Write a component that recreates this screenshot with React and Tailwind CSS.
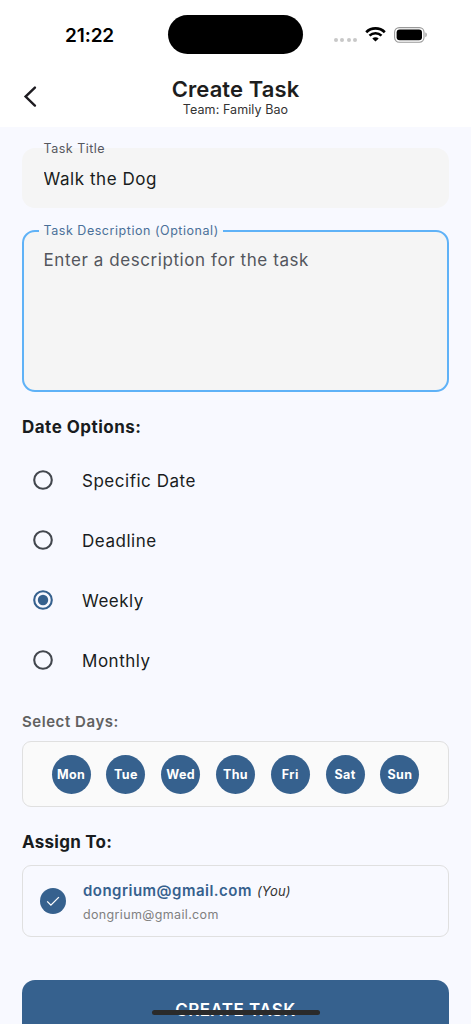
import { useState } from "react";

const DAYS = ["Mon", "Tue", "Wed", "Thu", "Fri", "Sat", "Sun"];
const DATE_OPTIONS = ["Specific Date", "Deadline", "Weekly", "Monthly"];

const StatusBar = () => (
  <div className="flex h-[69px] items-center">
    <div className="w-[168px] pl-[65px] pt-px text-[19px] font-semibold leading-none tracking-[-0.1px] text-black">21:22</div>
    <div className="h-[39px] w-[135px] rounded-full bg-black" />
    <div className="flex items-center pl-[31px]">
      <div className="mt-[11px] flex gap-[2.4px]">
        {[0, 1, 2, 3].map((dot) => (
          <span key={dot} className="size-[4px] rounded-full bg-[#c8c8c8]" />
        ))}
      </div>
      <svg className="ml-[8px] h-[15px] w-[21px]" viewBox="0 0 21 15">
        <path d="M1.2 5.2C6.4 0.1 14.6 0.1 19.8 5.2" fill="none" stroke="#000" strokeWidth="2.7" />
        <path d="M4.5 8.6C7.9 5.4 13.1 5.4 16.5 8.6" fill="none" stroke="#000" strokeWidth="2.6" />
        <path d="M7.3 11.4C9.1 9.8 11.9 9.8 13.7 11.4L10.5 14.6Z" fill="#000" />
      </svg>
      <svg className="ml-[8px] h-[16px] w-[34px]" viewBox="0 0 34 16">
        <rect x="0.6" y="0.6" width="29.4" height="14.6" rx="4.6" fill="none" stroke="#999" strokeWidth="1.1" />
        <rect x="2.6" y="2.6" width="25.4" height="10.6" rx="3" fill="#000" />
        <path d="M31.4 5.6C33.2 6.1 33.2 9.7 31.4 10.2Z" fill="#999" />
      </svg>
    </div>
  </div>
);

const Header = () => (
  <header className="flex h-[58px] items-start">
    <button type="button" aria-label="Back" className="w-[72px] pl-[23px] pt-[17px]">
      <svg className="h-[22px] w-[14px]" viewBox="0 0 14 22" fill="none" stroke="#1d1b20" strokeWidth="2.4" strokeLinecap="round">
        <path d="M11.9 1.6L2.6 10.6L11.9 19.6" />
      </svg>
    </button>
    <div className="flex-1 pt-[7px] text-center">
      <h1 className="text-[22px] font-semibold leading-[26px] tracking-[0.1px] text-[#1d1d1d]">Create Task</h1>
      <p className="text-[12.5px] leading-[15px] tracking-[0.08px] text-[#333]">Team: Family Bao</p>
    </div>
    <div className="w-[72px]" />
  </header>
);

const Radio = ({ label, checked, onSelect }) => (
  <button type="button" role="radio" aria-checked={checked} onClick={onSelect} className="flex h-[60px] w-full items-center pl-[11px] text-left">
    <svg className="size-[20px]" viewBox="0 0 20 20">
      <circle cx="10" cy="10" r="8.8" fill="none" stroke={checked ? "#36618e" : "#43474e"} strokeWidth="2.1" />
      {checked && <circle cx="10" cy="10" r="5.2" fill="#36618e" />}
    </svg>
    <span className="pl-[29px] pt-[3px] text-[17px] tracking-[0.52px] text-[#191c20]">{label}</span>
  </button>
);

const App = () => {
  const [title, setTitle] = useState("Walk the Dog");
  const [description, setDescription] = useState("");
  const [dateOption, setDateOption] = useState("Weekly");
  const [selectedDays, setSelectedDays] = useState(DAYS);

  const toggleDay = (day) => {
    setSelectedDays((prev) => (prev.includes(day) ? prev.filter((d) => d !== day) : [...prev, day]));
  };

  return (
    <div className="relative h-[1024px] w-[471px] overflow-hidden bg-[#f8f9ff] font-['Inter',sans-serif]">
      <div className="bg-white">
        <StatusBar />
        <Header />
      </div>

      <main className="px-[22px] pt-[21px]">
        {/* Task title */}
        <div className="relative h-[60px] rounded-[13px] bg-[#f5f5f5]">
          <label htmlFor="title" className="absolute left-[21.5px] top-[-8px] text-[12.5px] leading-[17px] tracking-[0.5px] text-[#55585f]">
            Task Title
          </label>
          <input
            id="title"
            value={title}
            onChange={(e) => setTitle(e.target.value)}
            className="h-full w-full bg-transparent pl-[21.5px] pt-[2px] text-[17px] tracking-[0.55px] text-[#191c20] outline-none"
          />
        </div>

        {/* Task description */}
        <div className="relative mt-[22px] h-[162px] rounded-[13px] border-2 border-[#5fb2f7] bg-[#f5f5f5]">
          <label
            htmlFor="description"
            className="absolute left-[15px] top-[-2px] flex h-[2px] w-[184px] items-center whitespace-nowrap bg-[#f5f5f5] pl-[4.5px] text-[12.5px] tracking-[0.54px] text-[#4a7099]"
          >
            <span className="pt-px">Task Description (Optional)</span>
          </label>
          <textarea
            id="description"
            value={description}
            onChange={(e) => setDescription(e.target.value)}
            placeholder="Enter a description for the task"
            className="block h-full w-full resize-none bg-transparent pl-[19.5px] pt-[16px] text-[17px] leading-[24px] tracking-[0.58px] outline-none placeholder:text-[#53565d]"
          />
        </div>

        <h2 className="mt-[23px] text-[17px] font-bold leading-[24px] tracking-[0.48px] text-[#191c20]">Date Options:</h2>
        <div role="radiogroup" className="mt-[11px]">
          {DATE_OPTIONS.map((option) => (
            <Radio key={option} label={option} checked={dateOption === option} onSelect={() => setDateOption(option)} />
          ))}
        </div>

        <h3 className="mt-[22px] text-[15px] font-semibold leading-[20px] tracking-[0.55px] text-[#616161]">Select Days:</h3>
        <div className="mt-[9px] flex h-[66px] items-center justify-center gap-[15.8px] rounded-[9px] border border-[#e0e0e0] bg-[#fafafa]">
          {DAYS.map((day) => (
            <button
              key={day}
              type="button"
              onClick={() => toggleDay(day)}
              className={`flex size-[39px] items-center justify-center rounded-full pt-[2px] text-[12.5px] font-bold tracking-[0.4px] ${
                selectedDays.includes(day) ? "bg-[#36618e] text-white" : "bg-gray-200 text-gray-700"
              }`}
            >
              {day}
            </button>
          ))}
        </div>

        <h2 className="mt-[23px] text-[17px] font-bold leading-[24px] tracking-[0.25px] text-[#191c20]">Assign To:</h2>
        <div className="mt-[11px] flex h-[72px] items-center rounded-[9px] border border-[#e0e0e0] pl-[17px]">
          <span className="flex size-[26px] items-center justify-center rounded-full bg-[#36618e]">
            <svg className="size-[14px]" viewBox="0 0 14 14" fill="none" stroke="#fff" strokeWidth="1.3">
              <path d="M1.2 7.4L4.9 11.1L12.9 3.1" />
            </svg>
          </span>
          <div className="pl-[17px] pt-[2px]">
            <p className="flex items-center leading-[24px]">
              <span className="text-[15px] font-semibold tracking-[0.48px] text-[#36618e]">dongrium@gmail.com</span>
              <span className="pl-[5px] text-[13px] italic tracking-[0.2px] text-[#333]">(You)</span>
            </p>
            <p className="mt-px text-[12.5px] leading-[22px] tracking-[0.35px] text-[#808080]">dongrium@gmail.com</p>
          </div>
        </div>

        <button
          type="button"
          className="mt-[43px] h-[61px] w-full rounded-[13px] bg-[#36618e] text-[17px] font-semibold tracking-[0.45px] text-white"
        >
          CREATE TASK
        </button>
      </main>

      {/* Home indicator */}
      <div className="absolute left-[152px] top-[1010px] h-[5px] w-[168px] rounded-full bg-[#2a2a2a]" />
    </div>
  );
};

export default App;
